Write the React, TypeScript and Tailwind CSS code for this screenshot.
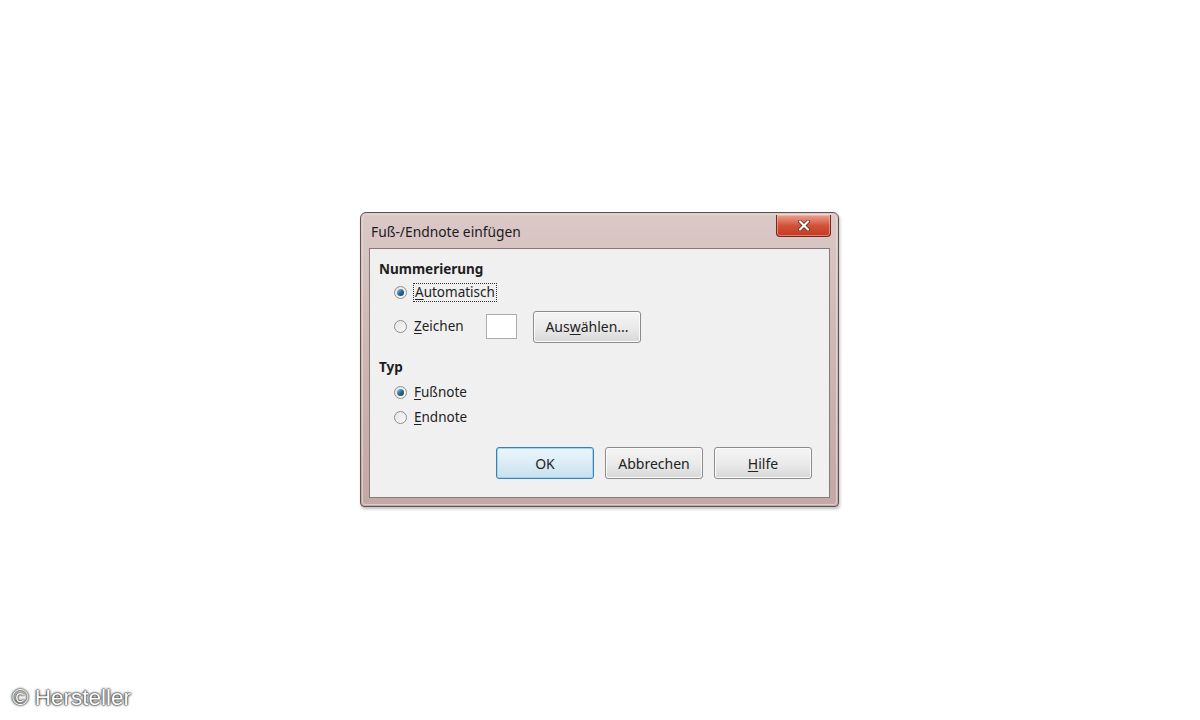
import React from "react";

const font = { fontFamily: '"Noto Sans", "Open Sans", sans-serif' };

function Radio({ checked }: { checked?: boolean }) {
  return (
    <span className="flex h-[13px] w-[13px] items-center justify-center rounded-full border border-[#8f8f8f] bg-gradient-to-br from-[#e4e4e4] to-[#fafafa]">
      {checked && (
        <span className="h-[7px] w-[7px] rounded-full bg-gradient-to-br from-[#9fd0ea] via-[#2a6c9a] to-[#123f5e]" />
      )}
    </span>
  );
}

function Btn({ children, w = "w-[98px]", focus }: { children: React.ReactNode; w?: string; focus?: boolean }) {
  return (
    <div
      className={`${w} flex h-[32px] items-center justify-center rounded-[3px] border text-[14px] text-[#222] ${
        focus
          ? "border-[#3c7fb1] bg-gradient-to-b from-[#eaf6fd] via-[#dcecf6] to-[#c8e0ef] shadow-[inset_0_0_0_1px_#9fd5ef]"
          : "border-[#8c8c8c] bg-gradient-to-b from-[#f4f4f4] via-[#ebebeb] to-[#d8d8d8] shadow-[inset_0_0_0_1px_#fbfbfb]"
      }`}
    >
      {children}
    </div>
  );
}

export default function App() {
  return (
    <div className="relative h-[720px] w-[1200px] bg-white" style={font}>
      <div className="pl-[360px] pt-[212px]">
        <div className="w-[479px] rounded-t-[6px] rounded-b-[4px] border border-[#5f5252] bg-gradient-to-b from-[#dbc9c7] via-[#cdb6b4] to-[#c2a8a6] p-[1px] shadow-[1px_2px_3px_rgba(0,0,0,0.25)]">
          <div className="rounded-t-[5px] rounded-b-[3px] border border-[#e8dcdb]/70 px-[6px] pb-[6px]">
            <div className="relative flex h-[33px] items-center pl-[2px] text-[13.8px] text-[#1a1a1a]">
              <span className="pt-[1px]">Fuß-/Endnote einfügen</span>
              <div className="absolute right-[-1px] top-[0px] flex h-[22px] w-[55px] items-center justify-center rounded-b-[4px] border border-t-0 border-[#6e2a1f] bg-gradient-to-b from-[#e9a08f] via-[#d2513a] to-[#c53a22] shadow-[inset_0_0_0_1px_rgba(255,200,190,0.5)]">
                <svg width="12" height="11" viewBox="0 0 12 11">
                  <path d="M2 1.5 L10 9.5 M10 1.5 L2 9.5" stroke="#5a1f15" strokeWidth="3.6" strokeLinecap="round" />
                  <path d="M2 1.5 L10 9.5 M10 1.5 L2 9.5" stroke="#fff" strokeWidth="2.2" strokeLinecap="round" />
                </svg>
              </div>
            </div>
            <div className="h-[250px] border border-[#8a7877] bg-[#f0f0f0] pl-[9px] pr-[10px] pt-[10px] text-[13.5px] text-[#1e1e1e]">
              <div className="font-bold leading-[20px]">Nummerierung</div>
              <div className="ml-[15px] mt-[3px] flex h-[20px] items-center gap-[6px]">
                <Radio checked />
                <span className="border border-dotted border-[#333] px-[1px] leading-[17px]">
                  <span className="underline underline-offset-2">A</span>utomatisch
                </span>
              </div>
              <div className="ml-[15px] mt-[9px] flex h-[31px] items-center">
                <Radio />
                <span className="ml-[7px] w-[72px]">
                  <span className="underline underline-offset-2">Z</span>eichen
                </span>
                <div className="h-[25px] w-[31px] border border-[#adadad] bg-white" />
                <div className="ml-[16px]">
                  <Btn w="w-[108px]">
                    Aus<span className="underline underline-offset-2">w</span>ählen...
                  </Btn>
                </div>
              </div>
              <div className="mt-[15px] font-bold leading-[20px]">Typ</div>
              <div className="ml-[15px] mt-[5px] flex h-[20px] items-center gap-[7px]">
                <Radio checked />
                <span>
                  <span className="underline underline-offset-2">F</span>ußnote
                </span>
              </div>
              <div className="ml-[15px] mt-[5px] flex h-[20px] items-center gap-[7px]">
                <Radio />
                <span>
                  <span className="underline underline-offset-2">E</span>ndnote
                </span>
              </div>
              <div className="mt-[20px] flex justify-end gap-[11px] pr-[7px]">
                <Btn focus>OK</Btn>
                <Btn>Abbrechen</Btn>
                <Btn>
                  <span className="underline underline-offset-2">H</span>ilfe
                </Btn>
              </div>
            </div>
          </div>
        </div>
      </div>
      <div
        className="absolute bottom-[10px] left-[12px] text-[22.5px] leading-[24px] text-white"
        style={{ fontFamily: '"Liberation Sans", Arial, sans-serif', textShadow: "0 0 3px #333, 0 0 2px #333, 0 0 1px #000" }}
      >
        © Hersteller
      </div>
    </div>
  );
}
